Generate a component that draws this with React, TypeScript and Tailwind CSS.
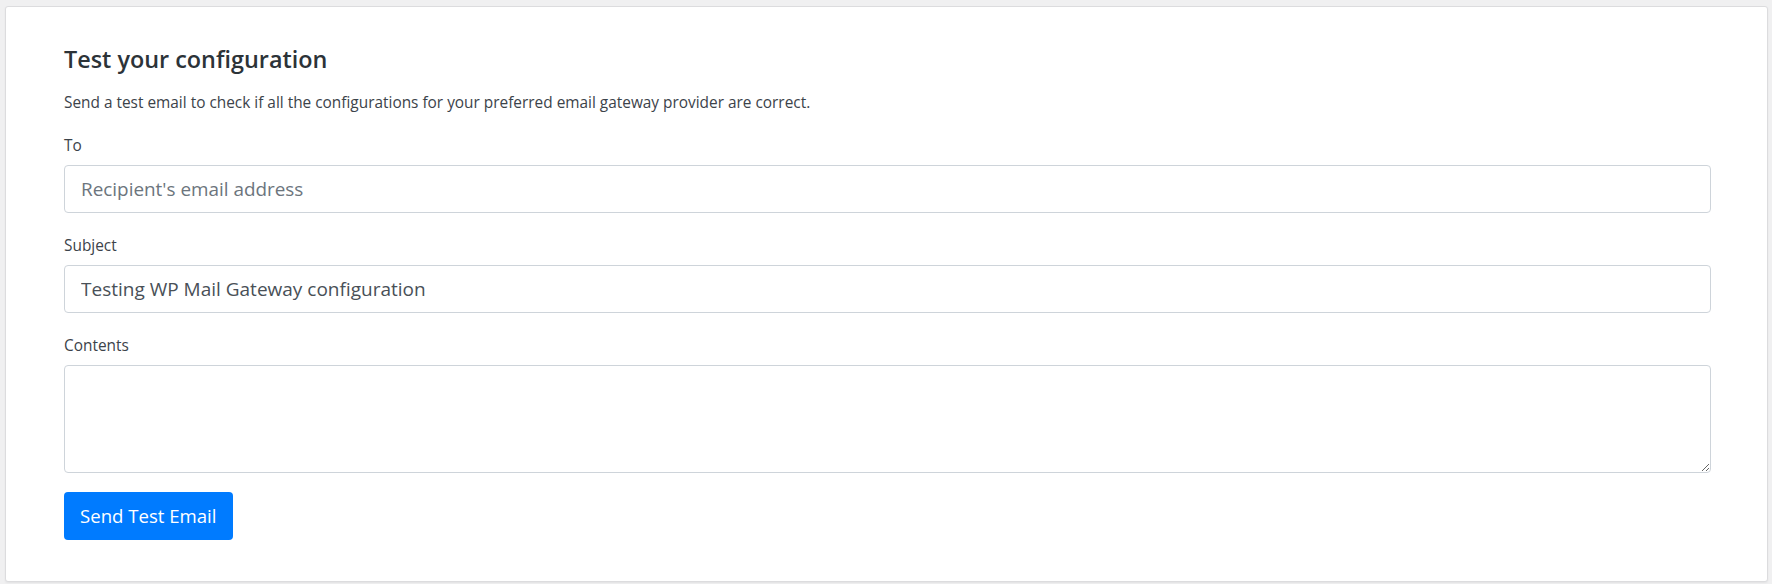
import React from "react";

export default function App() {
  return (
    <div className="min-h-[584px] bg-[#f0f0f1] pt-[6px] pl-[5px] pr-[4px] pb-[4px] font-['Open_Sans',sans-serif]">
      <div className="bg-white border border-[#dcdcde] rounded-[3px] shadow-[0_1px_2px_rgba(0,0,0,0.06)] pl-[58px] pr-[56px] pt-[36px] pb-[41px]">
        <h4 className="text-[23.4px] leading-[33px] font-semibold text-[#2c3338]">
          Test your configuration
        </h4>
        <p className="mt-[16px] text-[15.4px] leading-[21px] text-[#3c434a]">
          Send a test email to check if all the configurations for your preferred email gateway provider are correct.
        </p>
        <div className="mt-[22px] flex flex-col gap-[9px]">
          <label className="text-[15.4px] leading-[21px] text-[#3c434a]">To</label>
          <input
            type="text"
            placeholder="Recipient's email address"
            className="h-[48px] w-full border border-[#ced4da] rounded-[4px] px-[16px] text-[18.9px] text-[#495057] placeholder:text-[#6c757d] outline-none bg-white"
          />
        </div>
        <div className="mt-[22px] flex flex-col gap-[9px]">
          <label className="text-[15.4px] leading-[21px] text-[#3c434a]">Subject</label>
          <input
            type="text"
            defaultValue="Testing WP Mail Gateway configuration"
            className="h-[48px] w-full border border-[#ced4da] rounded-[4px] px-[16px] text-[19px] text-[#495057] outline-none bg-white"
          />
        </div>
        <div className="mt-[22px] flex flex-col gap-[9px]">
          <label className="text-[15.4px] leading-[21px] text-[#3c434a]">Contents</label>
          <textarea
            className="block h-[108px] w-full border border-[#ced4da] rounded-[4px] px-[16px] py-[8px] text-[18.9px] text-[#495057] outline-none bg-white"
          />
        </div>
        <button
          type="button"
          className="mt-[19px] h-[48px] px-[16px] rounded-[4px] bg-[#007bff] text-white text-[18.6px] leading-[48px]"
        >
          Send Test Email
        </button>
      </div>
    </div>
  );
}
